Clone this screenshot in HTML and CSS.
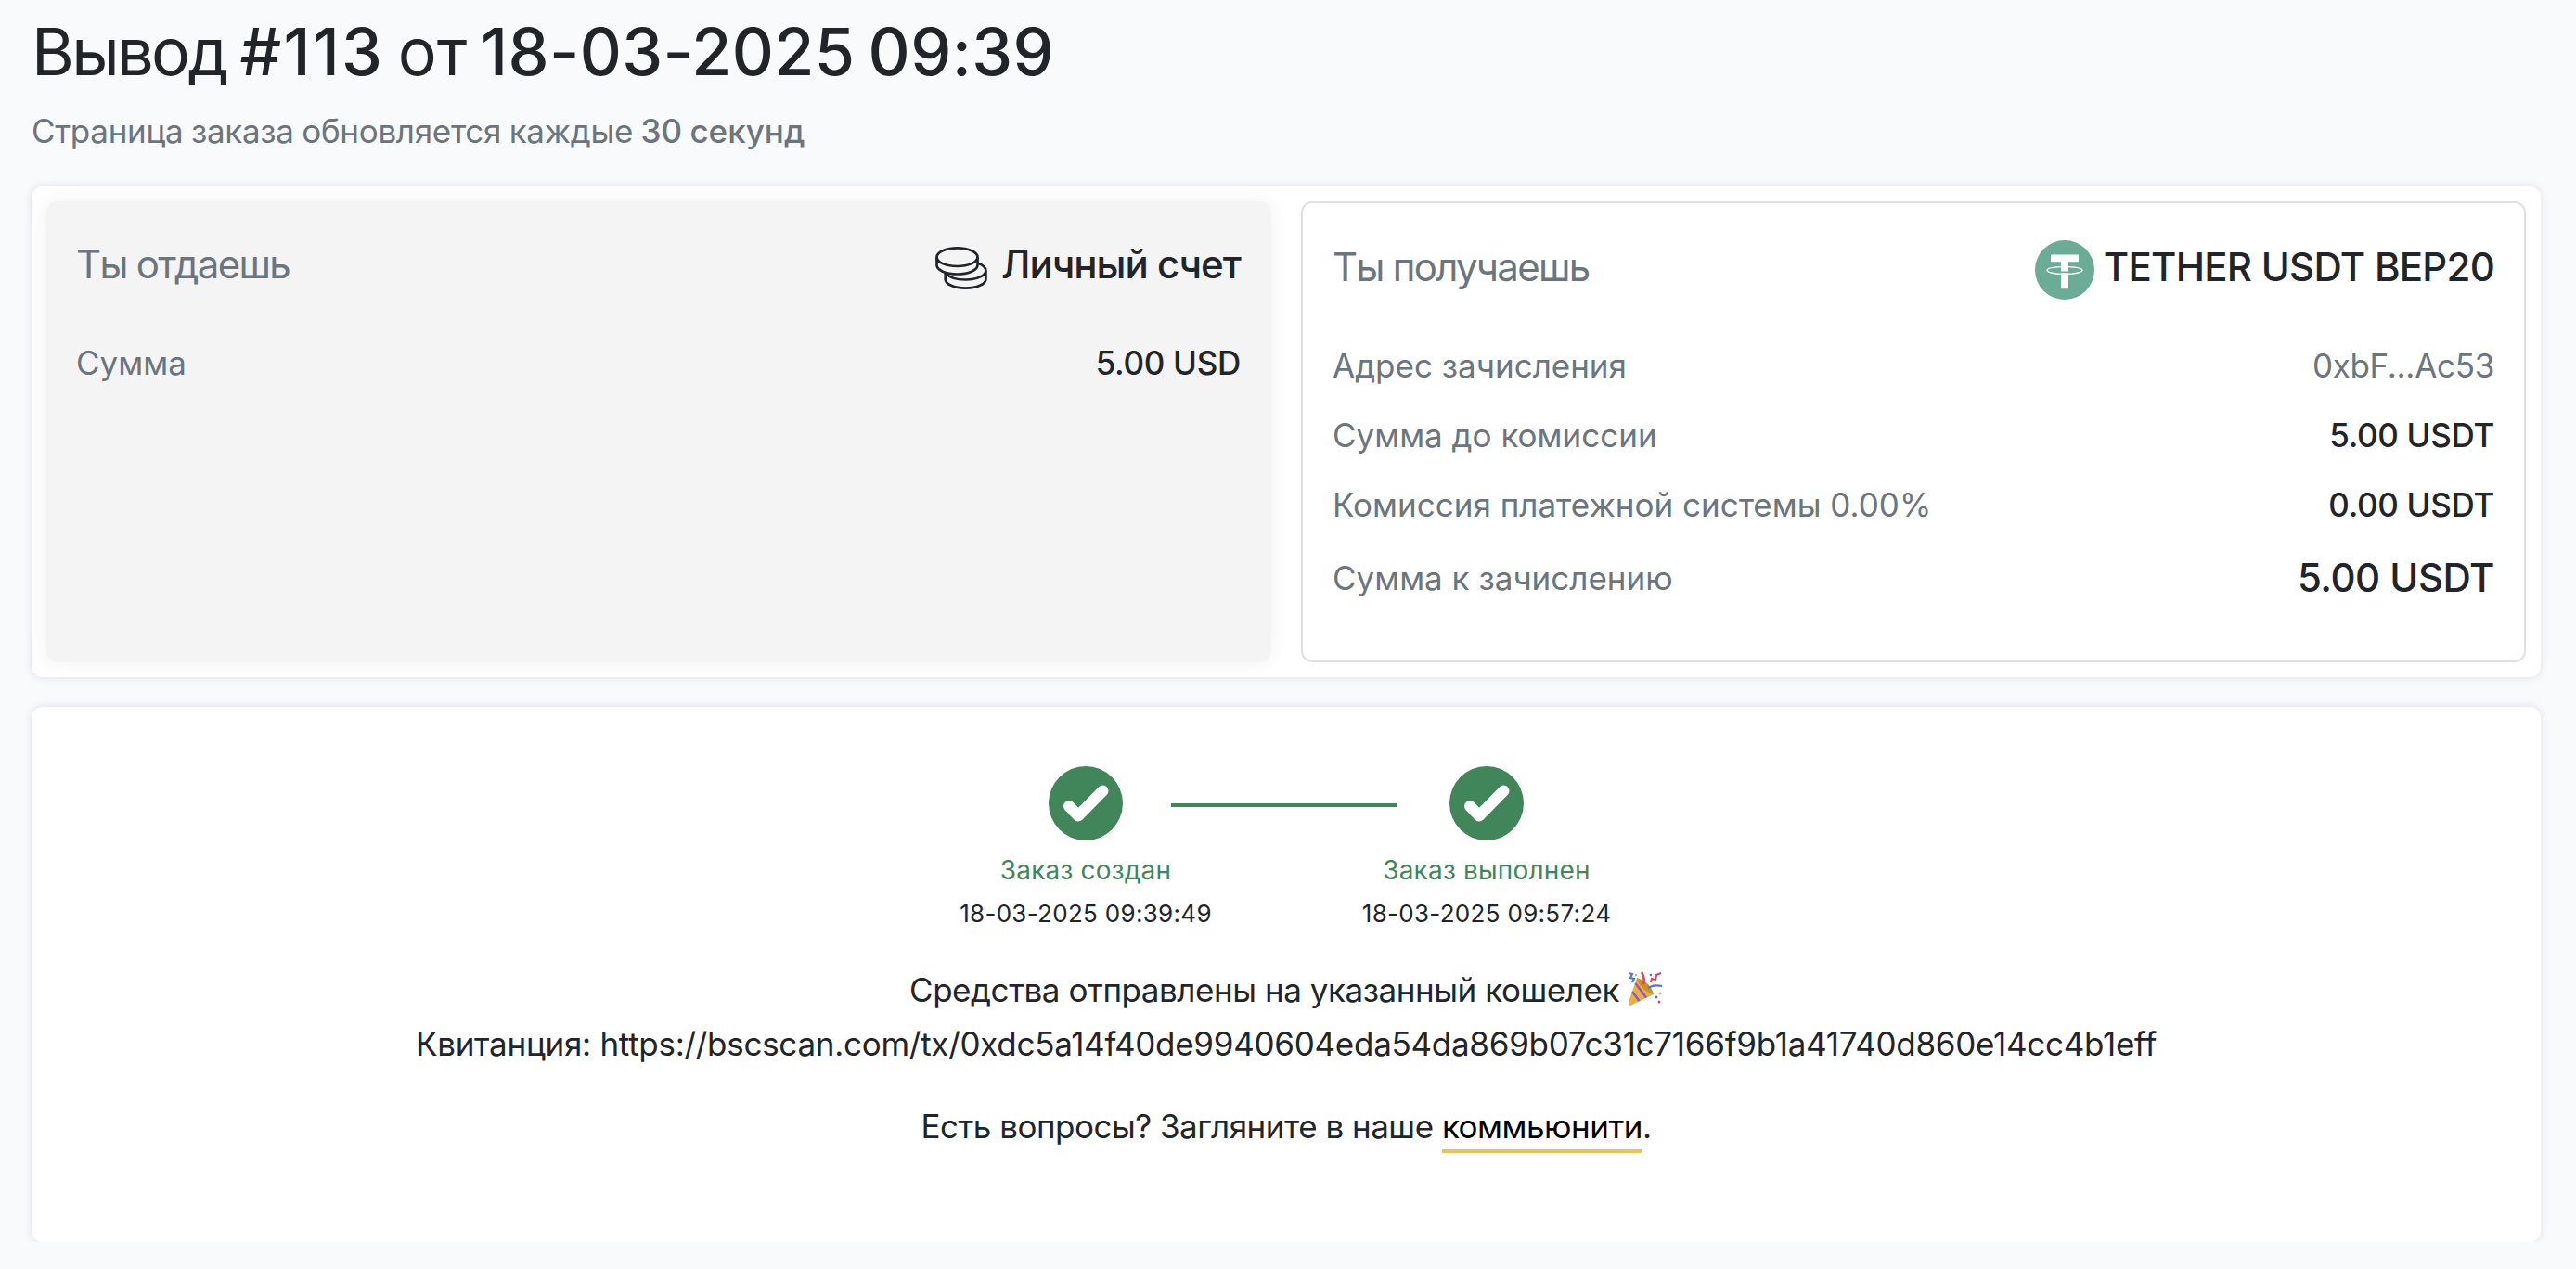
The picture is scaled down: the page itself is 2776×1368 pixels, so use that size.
FILE: index.html
```html
<!DOCTYPE html>
<html lang="ru">
<head>
    <meta charset="UTF-8">
    <meta name="viewport" content="width=device-width, initial-scale=1.0">
    <title>Вывод #113</title>
    <link rel="stylesheet" href="styles.css">
</head>

<body>
<div class="container">
    <h1><span class="title-word">Вывод</span> <b class="order-number">#113</b> от <b class="order-date">18-03-2025 09:39</b></h1>
    <p class="subtitle">Страница заказа обновляется каждые <b>30 секунд</b></p>

    <div class="card order">
        <div class="panel panel-give">
            <div class="row row-head">
                <span class="panel-title">Ты отдаешь</span>
                <span class="currency">
                    <svg class="icon-coins" viewBox="0 0 56 46" fill="none" stroke="#212529" stroke-width="2.7">
                        <ellipse cx="23.5" cy="11.2" rx="22" ry="9.8"/>
                        <path d="M1.5 11.2v8.6c0 5.4 9.8 9.7 22 9.7s22-4.3 22-9.7v-8.6"/>
                        <path d="M45.5 17.8c5.4 1.7 8.9 4.6 8.9 7.9 0 5.4-9.8 9.8-22 9.8-9.5 0-17.6-2.7-20.7-6.5"/>
                        <path d="M10.7 27.3v7.6c0 5.4 9.7 9.7 21.8 9.7s21.9-4.3 21.9-9.7v-9.2"/>
                    </svg>
                    <b class="account-name">Личный счет</b>
                </span>
            </div>
            <div class="row">
                <span class="label">Сумма</span>
                <b class="value">5.00 USD</b>
            </div>
        </div>

        <div class="panel panel-get">
            <div class="row row-head">
                <span class="panel-title">Ты получаешь</span>
                <span class="currency">
                    <svg class="icon-tether" viewBox="0 0 64 64">
                        <circle cx="32" cy="32" r="32" fill="#6aac96"/>
                        <path d="M17 15.5h30v7.7H36v29H28v-29H17z" fill="#fff"/>
                        <path d="M28 33.5h8v1.8h-8z" fill="#6aac96"/>
                        <path d="M28 28.6C19 29 13 30.3 13 32.3c0 2.3 8.5 4.1 19 4.1s19-1.8 19-4.1c0-2-6-3.3-15-3.7" fill="none" stroke="#fff" stroke-width="1.4"/>
                    </svg>
                    <b class="tether-name">TETHER USDT BEP20</b>
                </span>
            </div>
            <div class="row">
                <span class="label">Адрес зачисления</span>
                <span class="value value-address">0xbF...Ac53</span>
            </div>
            <div class="row">
                <span class="label">Сумма до комиссии</span>
                <b class="value">5.00 USDT</b>
            </div>
            <div class="row">
                <span class="label">Комиссия платежной системы 0.00%</span>
                <b class="value">0.00 USDT</b>
            </div>
            <div class="row row-total">
                <span class="label">Сумма к зачислению</span>
                <b class="value value-total">5.00 USDT</b>
            </div>
        </div>
    </div>

    <div class="card status">
        <div class="steps">
            <div class="step">
                <svg class="icon-check" viewBox="0 0 80 80">
                    <circle cx="40" cy="40" r="40" fill="#41865b"/>
                    <path d="M22 43L32 53.5L58.5 26.5" fill="none" stroke="#fff" stroke-width="12" stroke-linecap="round" stroke-linejoin="round"/>
                </svg>
                <span class="step-name">Заказ создан</span>
                <span class="step-date">18-03-2025 09:39:49</span>
            </div>
            <div class="step-line"></div>
            <div class="step">
                <svg class="icon-check" viewBox="0 0 80 80">
                    <circle cx="40" cy="40" r="40" fill="#41865b"/>
                    <path d="M22 43L32 53.5L58.5 26.5" fill="none" stroke="#fff" stroke-width="12" stroke-linecap="round" stroke-linejoin="round"/>
                </svg>
                <span class="step-name">Заказ выполнен</span>
                <span class="step-date">18-03-2025 09:57:24</span>
            </div>
        </div>

        <p class="message">
            <span class="message-text">Средства отправлены на указанный кошелек</span>
            <svg class="icon-party" viewBox="0 0 38 38" fill="none">
                <path d="M10 7L28 25L4 36.5Q0 38 1 33.5z" fill="#e3b341"/>
                <path d="M8.5 13L20 28.500M5 22L12.5 32" stroke="#a24fc4" stroke-width="2.4"/>
                <path d="M10 7Q17 9 22 14T28 25Q22 24 16 18T10 7z" fill="#c8922d"/>
                <path d="M17 14Q19 8 15 1" stroke="#d9475d" stroke-width="2.6"/>
                <path d="M22 18Q28 14 37 16M1 2l4 1-2 4 4 1-2 4" stroke="#4a78dc" stroke-width="2.2"/>
                <path d="M25 12l1-4 4 1 1-5 5-2" stroke="#d9475d" stroke-width="2.2"/>
                <circle cx="9" cy="4" r="1.2" fill="#e3b341"/>
                <circle cx="25" cy="4" r="1.3" fill="#4a78dc"/>
                <circle cx="35" cy="24" r="1.5" fill="#e3b341"/>
                <circle cx="31" cy="28" r="1.5" fill="#a24fc4"/>
                <circle cx="34" cy="33" r="1.5" fill="#d9475d"/>
            </svg>
        </p>
        <p class="receipt">Квитанция: https://bscscan.com/tx/0xdc5a14f40de9940604eda54da869b07c31c7166f9b1a41740d860e14cc4b1eff</p>
        <p class="question">Есть вопросы? Загляните в наше <a href="#">коммьюнити</a>.</p>
    </div>
</div>
</body>
</html>
```
FILE: styles.css
```css
body {
    font-family: Inter, 'Liberation Sans', sans-serif;
    background-color: #f8fafc;
    margin: 0;
    color: #212529;
    font-size: 35px;
    white-space: nowrap;
}

* {
    box-sizing: border-box;
}

b {
    font-weight: 500;
}

svg {
    display: block;
    flex: none;
}

.container {
    padding: 13px 38px 0 34px;
}

h1 {
    margin: 0;
    font-size: 70px;
    font-weight: 400;
    line-height: 86px;
    word-spacing: -5px;
}

.title-word {
    letter-spacing: -2.6px;
}

.order-number {
    letter-spacing: 2.2px;
}

.order-date {
    letter-spacing: 0.4px;
}

.subtitle {
    margin: 15px 0 33px;
    line-height: 54px;
    letter-spacing: -0.3px;
    word-spacing: -1px;
    color: #6c757d;
}

.subtitle b {
    letter-spacing: 0;
}

.card {
    background-color: #fff;
    border-radius: 12px;
    box-shadow: 0 0 10px rgba(60, 50, 90, 0.14);
}

.order {
    display: flex;
    gap: 32px;
    height: 529px;
    padding: 16px;
}

.panel {
    width: 50%;
    border: 2px solid #dee2e6;
    border-radius: 12px;
    padding: 31px 32px;
}

.panel-give {
    border: none;
    padding: 32px 33px 32px 32px;
    background-color: #f4f4f4;
    box-shadow: 0 0 20px rgba(60, 60, 90, 0.07);
}

.panel-get {
    padding-top: 33px;
}

.row {
    display: flex;
    justify-content: space-between;
    align-items: center;
    height: 75px;
    line-height: 54px;
}

.row-head {
    height: 72px;
    margin-bottom: 32px;
    font-size: 42px;
}

.row-total {
    height: 83px;
}

.panel-title,
.label,
.value-address {
    color: #6c757d;
}

.panel-title {
    letter-spacing: -1.7px;
}

.value {
    letter-spacing: -0.3px;
}

.currency {
    display: flex;
    align-items: center;
}

.icon-coins {
    width: 56px;
    height: 46px;
    margin: 7px 15px 0 0;
}

.icon-tether {
    width: 64px;
    height: 64px;
    margin: 6px 10px 0 0;
}

.account-name {
    letter-spacing: -1px;
}

.tether-name {
    letter-spacing: -0.75px;
}

.value-total {
    font-size: 42px;
    letter-spacing: -0.5px;
}

.status {
    height: 577px;
    margin-top: 32px;
    padding-top: 64px;
    text-align: center;
}

.steps {
    display: flex;
    justify-content: center;
    margin-bottom: 30px;
}

.step {
    display: flex;
    flex-direction: column;
    align-items: center;
    width: 190px;
}

.step-line {
    width: 243px;
    height: 4px;
    margin: 40px 2px 0 -3px;
    background-color: #41865b;
}

.icon-check {
    width: 80px;
    height: 80px;
}

.step-name {
    margin-top: 10px;
    font-size: 28px;
    line-height: 44px;
    letter-spacing: 0.2px;
    color: #41865b;
}

.step-date {
    margin-top: 2px;
    font-size: 26px;
    line-height: 46px;
    letter-spacing: 0.3px;
}

.status p {
    margin: 0;
    line-height: 58px;
}

.message {
    display: flex;
    justify-content: center;
    align-items: center;
    letter-spacing: -0.45px;
}

.icon-party {
    width: 38px;
    height: 38px;
    margin: -3px 0 0 9px;
}

.receipt {
    letter-spacing: -0.28px;
}

.question {
    letter-spacing: -0.5px;
}

.question a {
    color: #000;
    text-decoration: none;
    border-bottom: 4px solid #edc358;
    padding-bottom: 4px;
}

.status .question {
    margin-top: 31px;
}
```
